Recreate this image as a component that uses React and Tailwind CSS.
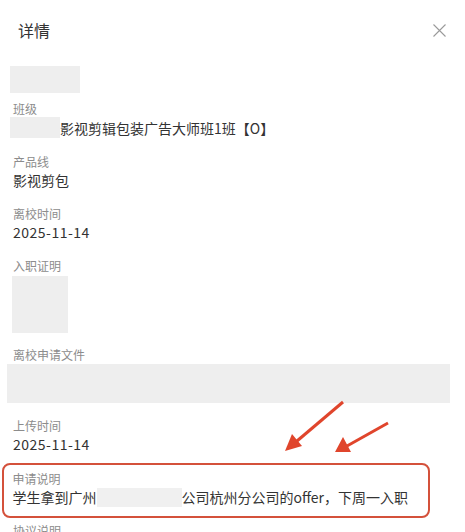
import React from "react";

function Label({ children, className = "" }) {
  return (
    <div className={"text-[12px] leading-[16px] text-[#8c8c8c] " + className}>{children}</div>
  );
}

function Value({ children, className = "" }) {
  return (
    <div className={"text-[14px] leading-[20px] text-[#333333] " + className}>{children}</div>
  );
}

export default function App() {
  return (
    <div className="relative w-[465px] h-[532px] overflow-hidden bg-white font-['Noto_Sans_CJK_SC','Noto_Sans',sans-serif]">
      {/* header */}
      <div className="flex items-center justify-between pl-[18px] pr-[19px] pt-[18px]">
        <div className="text-[16px] leading-[24px] text-[#333333]">详情</div>
        <svg width="13" height="13" viewBox="0 0 13 13" className="block">
          <path d="M0.5 0.5 L12.5 12.5 M12.5 0.5 L0.5 12.5" stroke="#9a9a9a" strokeWidth="1.1" fill="none" />
        </svg>
      </div>

      {/* content */}
      <div className="flex flex-col pl-[13px]">
        <div className="mt-[24px] -ml-[3px] w-[70px] h-[27px] bg-[#eeeeee]" />

        <Label className="mt-[8px]">班级</Label>
        <div className="flex items-center h-[21px] -ml-[3px]">
          <div className="w-[50px] h-[21px] bg-[#eeeeee]" />
          <Value>影视剪辑包装广告大师班1班【O】</Value>
        </div>

        <Label className="mt-[16px]">产品线</Label>
        <Value>影视剪包</Value>

        <Label className="mt-[16px]">离校时间</Label>
        <Value className="tracking-[0.5px]">2025-11-14</Value>

        <Label className="mt-[16px]">入职证明</Label>
        <div className="mt-[2px] -ml-[1px] w-[56px] h-[57px] bg-[#eeeeee]" />

        <Label className="mt-[14px]">离校申请文件</Label>
        <div className="mt-[1px] -ml-[6px] w-[443px] h-[39px] bg-[#eeeeee]" />

        <Label className="mt-[15px]">上传时间</Label>
        <Value className="tracking-[0.5px]">2025-11-14</Value>

        <div className="mt-[9px] -ml-[11px] w-[428px] rounded-[8px] border-[2.5px] border-[#d4513b] pl-[8.5px] pt-[6px] pb-[9px]">
          <Label>申请说明</Label>
          <div className="flex items-center h-[20px]">
            <Value>学生拿到广州</Value>
            <div className="w-[85px] h-[19px] bg-[#f0f0f0]" />
            <Value>公司杭州分公司的offer，下周一入职</Value>
          </div>
        </div>

        <Label className="mt-[5px]">协议说明</Label>
      </div>

      {/* annotation arrows */}
      <svg className="absolute left-0 top-0 pointer-events-none" width="465" height="532" viewBox="0 0 465 532">
        <line x1="343" y1="402" x2="297" y2="441" stroke="#e0452c" strokeWidth="3" />
        <polygon points="285,451 292,434 302,446" fill="#e0452c" />
        <line x1="388" y1="423" x2="347" y2="446" stroke="#e0452c" strokeWidth="3" />
        <polygon points="335,452 343,437 351,452" fill="#e0452c" />
      </svg>
    </div>
  );
}
